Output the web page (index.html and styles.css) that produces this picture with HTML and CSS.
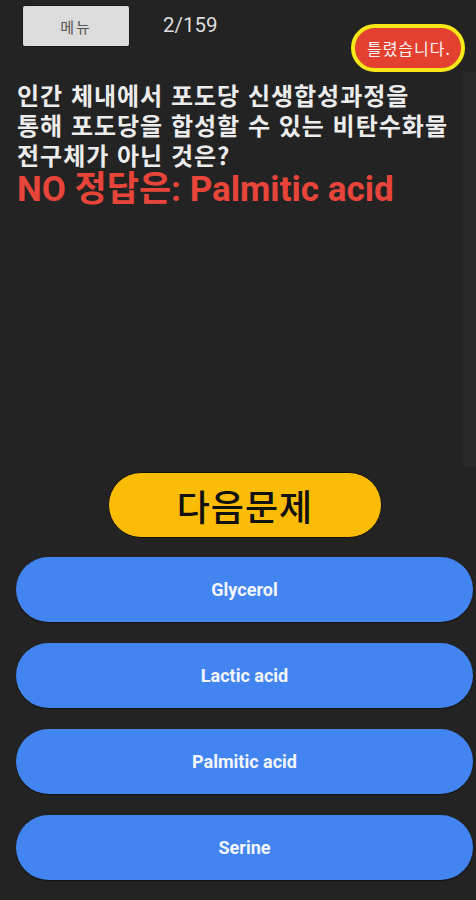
FILE: index.html
```html
<!DOCTYPE html>
<html lang="ko">
<head>
    <meta charset="UTF-8">
    <meta name="viewport" content="width=device-width, initial-scale=1.0">
    <title>퀴즈</title>
    <link rel="stylesheet" href="styles.css">
</head>
<body>
    <div class="top">
        <button class="menu">메뉴</button>
        <span class="count">2/159</span>
        <span class="result">틀렸습니다.</span>
    </div>

    <div class="question">
        <p class="text">인간 체내에서 포도당 신생합성과정을 통해 포도당을 합성할 수 있는 비탄수화물 전구체가 아닌 것은?</p>
        <p class="answer">NO 정답은: Palmitic acid</p>
    </div>

    <div class="next-wrap">
        <button class="next">다음문제</button>
    </div>

    <div class="options">
        <button class="option">Glycerol</button>
        <button class="option">Lactic acid</button>
        <button class="option">Palmitic acid</button>
        <button class="option">Serine</button>
    </div>
</body>
</html>
```

FILE: styles.css
```css
body {
    margin: 0;
    width: 476px;
    height: 900px;
    background-color: #232323;
    font-family: Roboto, "Noto Sans CJK KR", sans-serif;
    overflow: hidden;
}

button {
    font-family: Roboto, "Noto Sans CJK KR", sans-serif;
    border: none;
    cursor: pointer;
}

.top {
    display: flex;
    align-items: flex-start;
    height: 67px;
    padding: 5px 11px 0 22px;
}

.menu {
    width: 108px;
    height: 42px;
    background-color: #dcdcdc;
    color: #555555;
    font-family: "Noto Sans CJK KR", sans-serif;
    font-size: 15px;
    letter-spacing: 2px;
    border-radius: 3px;
    border: 1px solid #1a1a1a;
}

.count {
    margin: 8px 0 0 33px;
    color: #dedede;
    font-size: 20.5px;
}

.result {
    margin: 19px 0 0 auto;
    padding: 0 10px 0 12px;
    height: 40px;
    line-height: 40px;
    background-color: #e4402f;
    border: 4px solid #f7e81a;
    border-radius: 24px;
    color: #f4f4f4;
    font-family: "Noto Sans CJK KR", sans-serif;
    font-size: 16px;
    letter-spacing: 1px;
}

.question {
    width: 445px;
    height: 395px;
    padding-left: 17px;
    box-shadow: 14px 0 0 #282828;
}

.question p {
    margin: 0;
}

.text {
    padding-top: 8px;
    color: #ececec;
    font-family: "Noto Sans CJK KR", sans-serif;
    font-weight: 700;
    font-size: 24px;
    line-height: 30px;
    letter-spacing: 1px;
    word-break: keep-all;
}

.answer {
    margin-top: 4px;
    color: #e8453a;
    font-family: Roboto, "Noto Sans CJK KR", sans-serif;
    font-weight: 700;
    font-size: 35px;
    line-height: 40px;
}

.next-wrap {
    display: flex;
    justify-content: center;
    padding: 5px 0 0 14px;
}

.next {
    width: 274px;
    height: 66px;
    background-color: #fbbc05;
    border: 1px solid #111111;
    border-radius: 33px;
    color: #111111;
    font-family: "Noto Sans CJK KR", sans-serif;
    font-weight: 500;
    font-size: 36px;
    letter-spacing: 1px;
}

.options {
    display: flex;
    flex-direction: column;
    gap: 21px;
    padding: 19px 3px 0 16px;
}

.option {
    height: 65px;
    background-color: #4285f0;
    border-radius: 33px;
    color: #f4f6fb;
    font-weight: 700;
    font-size: 18px;
    box-shadow: 0 1px 1px #111111;
}
```
